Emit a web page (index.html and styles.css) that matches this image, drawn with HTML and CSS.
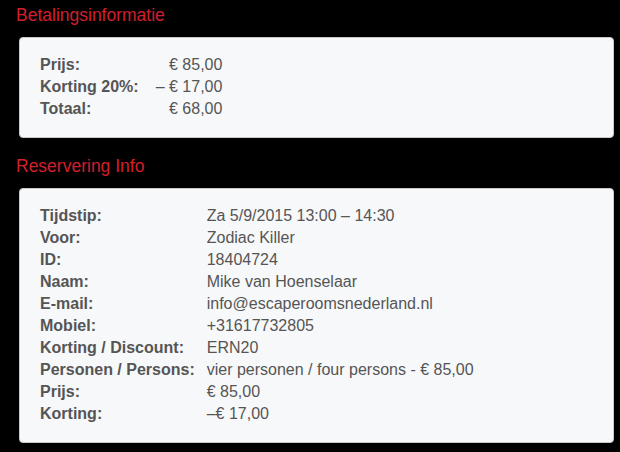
FILE: index.html
```html
<!DOCTYPE html>
<html lang="nl">
<head>
<meta charset="utf-8">
<title>Reservering</title>
<link rel="stylesheet" href="styles.css">
</head>
<body>
<main class="page">
  <section class="section">
    <h2 class="section-title">Betalingsinformatie</h2>
    <div class="card">
      <dl class="pay-grid">
        <dt>Prijs:</dt><dd>€ 85,00</dd>
        <dt>Korting 20%:</dt><dd>– € 17,00</dd>
        <dt>Totaal:</dt><dd>€ 68,00</dd>
      </dl>
    </div>
  </section>
  <section class="section">
    <h2 class="section-title">Reservering Info</h2>
    <div class="card">
      <dl class="info-grid">
        <dt>Tijdstip:</dt><dd>Za 5/9/2015 13:00 – 14:30</dd>
        <dt>Voor:</dt><dd>Zodiac Killer</dd>
        <dt>ID:</dt><dd>18404724</dd>
        <dt>Naam:</dt><dd>Mike van Hoenselaar</dd>
        <dt>E-mail:</dt><dd>info@escaperoomsnederland.nl</dd>
        <dt>Mobiel:</dt><dd>+31617732805</dd>
        <dt>Korting / Discount:</dt><dd>ERN20</dd>
        <dt>Personen / Persons:</dt><dd>vier personen / four persons - € 85,00</dd>
        <dt>Prijs:</dt><dd>€ 85,00</dd>
        <dt>Korting:</dt><dd>–€ 17,00</dd>
      </dl>
    </div>
  </section>
</main>
</body>
</html>
```

FILE: styles.css
```css
html, body {
  margin: 0;
  padding: 0;
  background: #000;
}

body {
  font-family: "Liberation Sans", Arial, sans-serif;
  color: #555;
}

.page {
  padding: 5px 6px 0 16px;
  display: flex;
  flex-direction: column;
  gap: 18px;
}

.section {
  display: flex;
  flex-direction: column;
  gap: 12px;
}

.section-title {
  margin: 0;
  font-size: 17.5px;
  line-height: 20px;
  font-weight: normal;
  color: #d21f2d;
}

.card {
  margin-left: 3px;
  background: #f7f8fa;
  border: 1px solid #c9c9cb;
  border-radius: 4px;
  padding: 16px 20px 17px;
}

.pay-grid,
.info-grid {
  margin: 0;
  display: grid;
  grid-template-columns: auto auto;
  justify-content: start;
  font-size: 16px;
  line-height: 22px;
}

.pay-grid {
  column-gap: 17px;
}

.pay-grid dd {
  text-align: right;
}

.info-grid {
  column-gap: 12px;
}

dt {
  font-weight: bold;
  white-space: nowrap;
}

dd {
  margin: 0;
  white-space: nowrap;
}
```
